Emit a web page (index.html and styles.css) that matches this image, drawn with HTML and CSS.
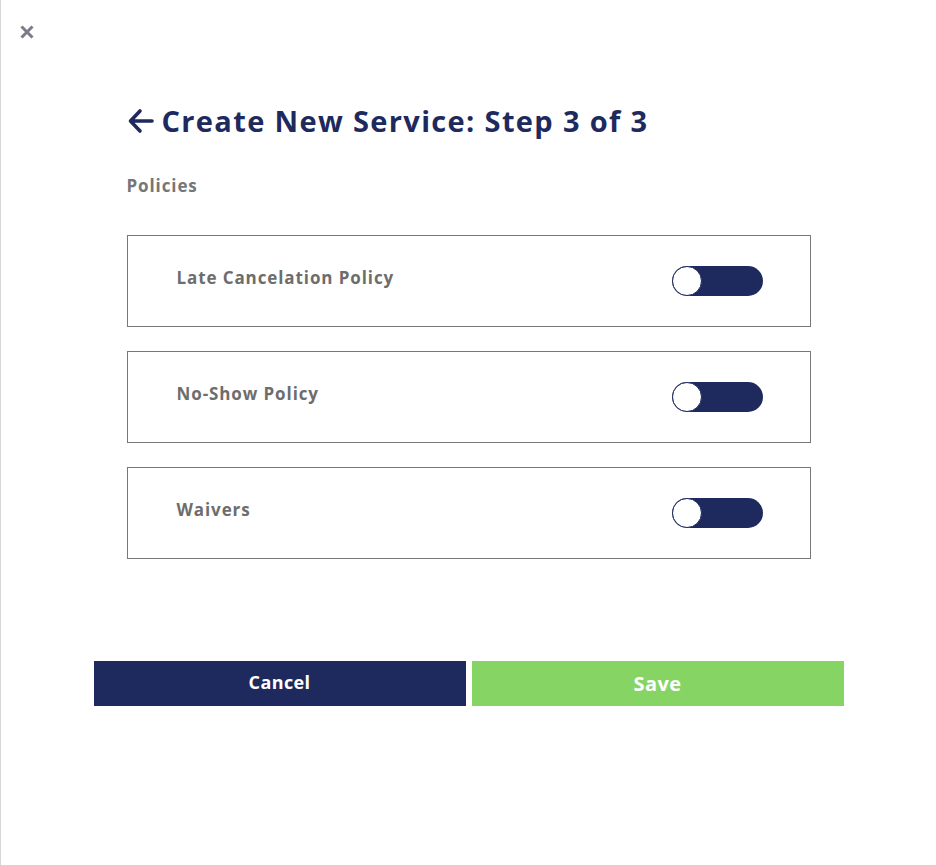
FILE: index.html
```html
<!DOCTYPE html>
<html lang="en">
  <head>
    <meta charset="UTF-8" />
    <meta name="viewport" content="width=device-width, initial-scale=1.0" />
    <title>Create New Service: Step 3 of 3</title>
    <link rel="stylesheet" href="styles.css">
  </head>
  <body>
    <div class="panel">
      <!-- Close button -->
      <button class="close" type="button" aria-label="Close">
        <svg width="16" height="16" viewBox="0 0 16 16">
          <path d="M2.5 2.5 L13.5 13.5 M13.5 2.5 L2.5 13.5" stroke="#7b7b8b" stroke-width="3" stroke-linecap="butt" />
        </svg>
      </button>

      <div class="content">
        <h1 class="title">
          <svg class="back" width="28" height="26" viewBox="0 0 28 26">
            <path d="M25 13 H4 M13 3 L3.5 13 L13 23" fill="none" stroke="#1e2a5e" stroke-width="3.6" stroke-linecap="round" stroke-linejoin="round" />
          </svg>
          Create New Service: Step 3 of 3
        </h1>

        <div class="section-label">Policies</div>

        <div class="policies">
          <div class="policy">
            <span class="policy-name">Late Cancelation Policy</span>
            <span class="toggle"><span class="knob"></span></span>
          </div>
          <div class="policy">
            <span class="policy-name">No-Show Policy</span>
            <span class="toggle"><span class="knob"></span></span>
          </div>
          <div class="policy">
            <span class="policy-name">Waivers</span>
            <span class="toggle"><span class="knob"></span></span>
          </div>
        </div>
      </div>

      <div class="actions">
        <button class="btn btn-cancel" type="button">Cancel</button>
        <button class="btn btn-save" type="button">Save</button>
      </div>
    </div>
  </body>
</html>
```

FILE: styles.css
```css
* {
  box-sizing: border-box;
}
body {
  margin: 0;
  font-family: "Open Sans", "DejaVu Sans", sans-serif;
  background-color: #ffffff;
}
.panel {
  border-left: 1px solid #d6d6d6; /* thin grey edge on the left */
  height: 865px;
  padding-top: 24px;
}
.close {
  display: block;
  margin-left: 18px;
  padding: 0;
  border: none;
  background: none;
  width: 16px;
  height: 16px;
  cursor: pointer;
}
.content {
  width: 684px;
  margin: 61px auto 0;
}
.title {
  display: flex;
  align-items: center;
  margin: 0;
  font-size: 29px;
  font-weight: 700;
  color: #1e2a5e;
  letter-spacing: 1.35px;
  line-height: 40px;
}
.back {
  margin-right: 7px;
}
.section-label {
  margin-top: 33px;
  font-size: 17px;
  font-weight: 700;
  color: #767676;
  letter-spacing: 0.9px;
}
.policies {
  margin-top: 38px;
  display: flex;
  flex-direction: column;
  gap: 24px;
}
.policy {
  display: flex;
  align-items: center;
  justify-content: space-between;
  height: 92px;
  padding: 0 47px 0 49px;
  border: 1px solid #777777;
}
.policy-name {
  font-size: 17px;
  font-weight: 700;
  color: #6d6d6d;
  letter-spacing: 0.9px;
  margin-top: -8px;
}
.toggle {
  position: relative;
  width: 91px;
  height: 30px;
  border-radius: 15px;
  background-color: #1e2a5e;
}
.knob {
  position: absolute;
  left: 0;
  top: 0;
  width: 30px;
  height: 30px;
  border-radius: 50%;
  background-color: #ffffff;
  border: 1.5px solid #1e2a5e;
}
.actions {
  width: 750px;
  margin: 102px auto 0;
  display: flex;
  gap: 6px;
}
.btn {
  flex: 1;
  height: 45px;
  border: none;
  font-family: "Open Sans", "DejaVu Sans", sans-serif;
  font-weight: 700;
  color: #ffffff;
  letter-spacing: 0.4px;
  cursor: pointer;
}
.btn-cancel {
  background-color: #1e2a5e;
  font-size: 18px;
  padding-bottom: 4px;
}
.btn-save {
  background-color: #86d464;
  font-size: 20px;
}
```
